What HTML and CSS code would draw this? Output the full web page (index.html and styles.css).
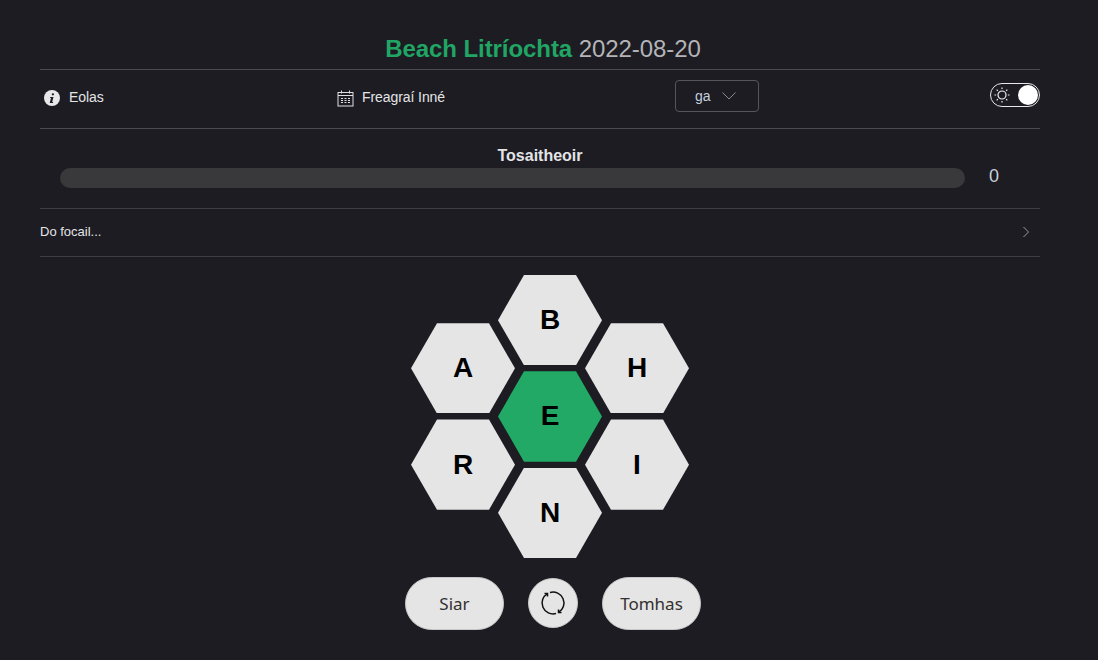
FILE: index.html
```html
<!DOCTYPE html>
<html>
  <head>
    <title>Beach Litríochta</title>
    <link rel="stylesheet" href="styles.css">
  </head>
  <body>
    <div class="container">
      <h1 class="title"><span class="title-name">Beach Litríochta</span> <span class="title-date">2022-08-20</span></h1>

      <div class="nav">
        <a class="nav-item">
          <svg class="nav-icon" width="16" height="16" viewBox="0 0 16 16">
            <circle cx="8" cy="8" r="8" fill="#e8e8ea"/>
            <path d="M8.9 3.2a1.15 1.15 0 1 1 -.01 2.3a1.15 1.15 0 0 1 .01 -2.3zM6.3 7h3.2l-1.3 5h1l-.3 1.1h-3.2l1.3 -5h-1z" fill="#1c1c22"/>
          </svg>
          <span class="nav-label">Eolas</span>
        </a>
        <a class="nav-item nav-item-answers">
          <svg class="nav-icon" width="17" height="17" viewBox="0 0 17 17" fill="none" stroke="#e0e0e2">
            <rect x="1" y="2.5" width="15" height="13.5"/>
            <path d="M1 5.5h15M4.5 .5v3M12.5 .5v3"/>
            <path d="M4 8.5h2M7.5 8.5h2M11 8.5h2M4 10.5h2M7.5 10.5h2M11 10.5h2M4 12.5h2M7.5 12.5h2M11 12.5h2" stroke-width="1"/>
          </svg>
          <span class="nav-label">Freagraí Inné</span>
        </a>
        <div class="lang-select">
          <span class="lang-value">ga</span>
          <svg width="14" height="8" viewBox="0 0 14 8" fill="none" stroke="#8a8a8e"><path d="M.5 .5l6.5 6.5l6.5 -6.5"/></svg>
        </div>
        <div class="theme-toggle">
          <svg width="18" height="18" viewBox="0 0 18 18" fill="none" stroke="#f0f0f2" stroke-width="1.2">
            <circle cx="9" cy="9" r="4"/>
            <path d="M9 1.5v1.6M9 14.9v1.6M1.5 9h1.6M14.9 9h1.6M3.7 3.7l1.1 1.1M13.2 13.2l1.1 1.1M3.7 14.3l1.1 -1.1M13.2 4.8l1.1 -1.1"/>
          </svg>
          <span class="toggle-knob"></span>
        </div>
      </div>

      <div class="rank">
        <div class="rank-name">Tosaitheoir</div>
        <div class="rank-row">
          <div class="progress"></div>
          <div class="score">0</div>
        </div>
      </div>

      <div class="found-words">
        <span>Do focail...</span>
        <svg width="8" height="12" viewBox="0 0 8 12" fill="none" stroke="#9a9a9e"><path d="M1.5 1l5 5l-5 5"/></svg>
      </div>
    </div>

    <div class="game">
      <div class="hive">
        <div class="hive-col">
          <div class="cell">A</div>
          <div class="cell">R</div>
        </div>
        <div class="hive-col">
          <div class="cell">B</div>
          <div class="cell cell-center">E</div>
          <div class="cell">N</div>
        </div>
        <div class="hive-col">
          <div class="cell">H</div>
          <div class="cell">I</div>
        </div>
      </div>

      <div class="controls">
        <button class="btn">Siar</button>
        <button class="btn-round">
          <svg width="26" height="26" viewBox="0 0 26 26" fill="none" stroke="#111" stroke-width="1.5">
            <path d="M10 2.5A10.9 10.9 0 0 1 18.5 22.4"/>
            <path d="M16 23.5A10.9 10.9 0 0 1 7.5 3.6"/>
            <path d="M18.5 19.4v3h3M7.5 6.6v-3h-3"/>
          </svg>
        </button>
        <button class="btn">Tomhas</button>
      </div>
    </div>
  </body>
</html>
```

FILE: styles.css
```css
* {
  box-sizing: border-box;
}

body {
  margin: 0;
  background-color: #1c1c22;
  color: #e4e4e7;
  font-family: "Liberation Sans", Arial, sans-serif;
}

.container {
  width: 1000px;
  margin-left: 40px;
}

.title {
  margin: 0;
  padding: 35px 0 6px 6px;
  font-size: 24px;
  font-weight: 400;
  letter-spacing: -0.07px;
  line-height: 28px;
  text-align: center;
  border-bottom: 1px solid #4c4c50;
  height: 70px;
}

.title-name {
  color: #21a564;
  font-weight: 700;
}

.title-date {
  color: #b4b4b8;
}

.nav {
  display: grid;
  grid-template-columns: 293px 338px 1fr auto;
  align-items: center;
  height: 59px;
  padding-left: 4px;
  padding-bottom: 2px;
  border-bottom: 1px solid #4c4c50;
}

.nav-item {
  display: flex;
  align-items: center;
  gap: 9px;
  font-size: 14px;
  color: #e4e4e7;
}

.nav-item-answers {
  gap: 8px;
}

.nav-label {
  padding-bottom: 2px;
  letter-spacing: -0.08px;
}

.nav-icon {
  flex: none;
}

.lang-select {
  display: flex;
  align-items: center;
  gap: 11px;
  width: 84px;
  height: 32px;
  margin-top: -4px;
  padding-left: 19px;
  border: 1px solid #56565a;
  border-radius: 4px;
  font-size: 14px;
  color: #c4d0dc;
}

.theme-toggle {
  display: flex;
  align-items: center;
  justify-content: space-between;
  width: 50px;
  height: 24px;
  margin-top: -6px;
  padding: 0 1px 0 2px;
  border: 1px solid #e8e8ea;
  border-radius: 12px;
}

.toggle-knob {
  width: 20px;
  height: 20px;
  border-radius: 50%;
  background-color: #fff;
}

.rank {
  height: 80px;
  padding-top: 18px;
  border-bottom: 1px solid #3e3e42;
}

.rank-name {
  font-size: 16px;
  font-weight: 700;
  line-height: 18px;
  text-align: center;
}

.rank-row {
  display: flex;
  align-items: flex-start;
  margin-top: 3px;
  padding-left: 20px;
}

.progress {
  flex: 1;
  height: 20px;
  border-radius: 10px;
  background-color: #39393b;
}

.score {
  width: 75px;
  margin-top: -2px;
  padding-left: 24px;
  font-size: 18px;
  line-height: 20px;
  color: #c8d0da;
}

.found-words {
  display: flex;
  align-items: center;
  justify-content: space-between;
  height: 48px;
  padding-right: 10px;
  padding-bottom: 2px;
  border-bottom: 1px solid #3e3e42;
  font-size: 13px;
}

.game {
  display: flex;
  flex-direction: column;
  align-items: center;
  padding-left: 2px;
}

.hive {
  display: flex;
  align-items: center;
  margin-top: 18px;
}

.hive-col {
  display: flex;
  flex-direction: column;
  gap: 6px;
  margin-right: -17px;
}

.hive-col:last-child {
  margin-right: 0;
}

.cell {
  display: flex;
  align-items: center;
  justify-content: center;
  width: 104px;
  height: 90.33px;
  background-color: #e5e5e5;
  clip-path: polygon(25% 0, 75% 0, 100% 50%, 75% 100%, 25% 100%, 0 50%);
  color: #000;
  font-size: 28px;
  font-weight: 700;
}

.cell-center {
  background-color: #21a965;
}

.controls {
  display: flex;
  align-items: center;
  gap: 24px;
  margin-top: 19px;
  margin-left: 6px;
}

.btn {
  width: 99px;
  height: 53px;
  border: 1px solid #c8c8c8;
  border-radius: 27px;
  background-color: #e5e5e5;
  color: #33302e;
  font-family: "Noto Sans", sans-serif;
  font-size: 17px;
}

.btn-round {
  display: flex;
  align-items: center;
  justify-content: center;
  width: 50px;
  height: 50px;
  padding: 0;
  border: 1px solid #c8c8c8;
  border-radius: 50%;
  background-color: #e5e5e5;
}
```
